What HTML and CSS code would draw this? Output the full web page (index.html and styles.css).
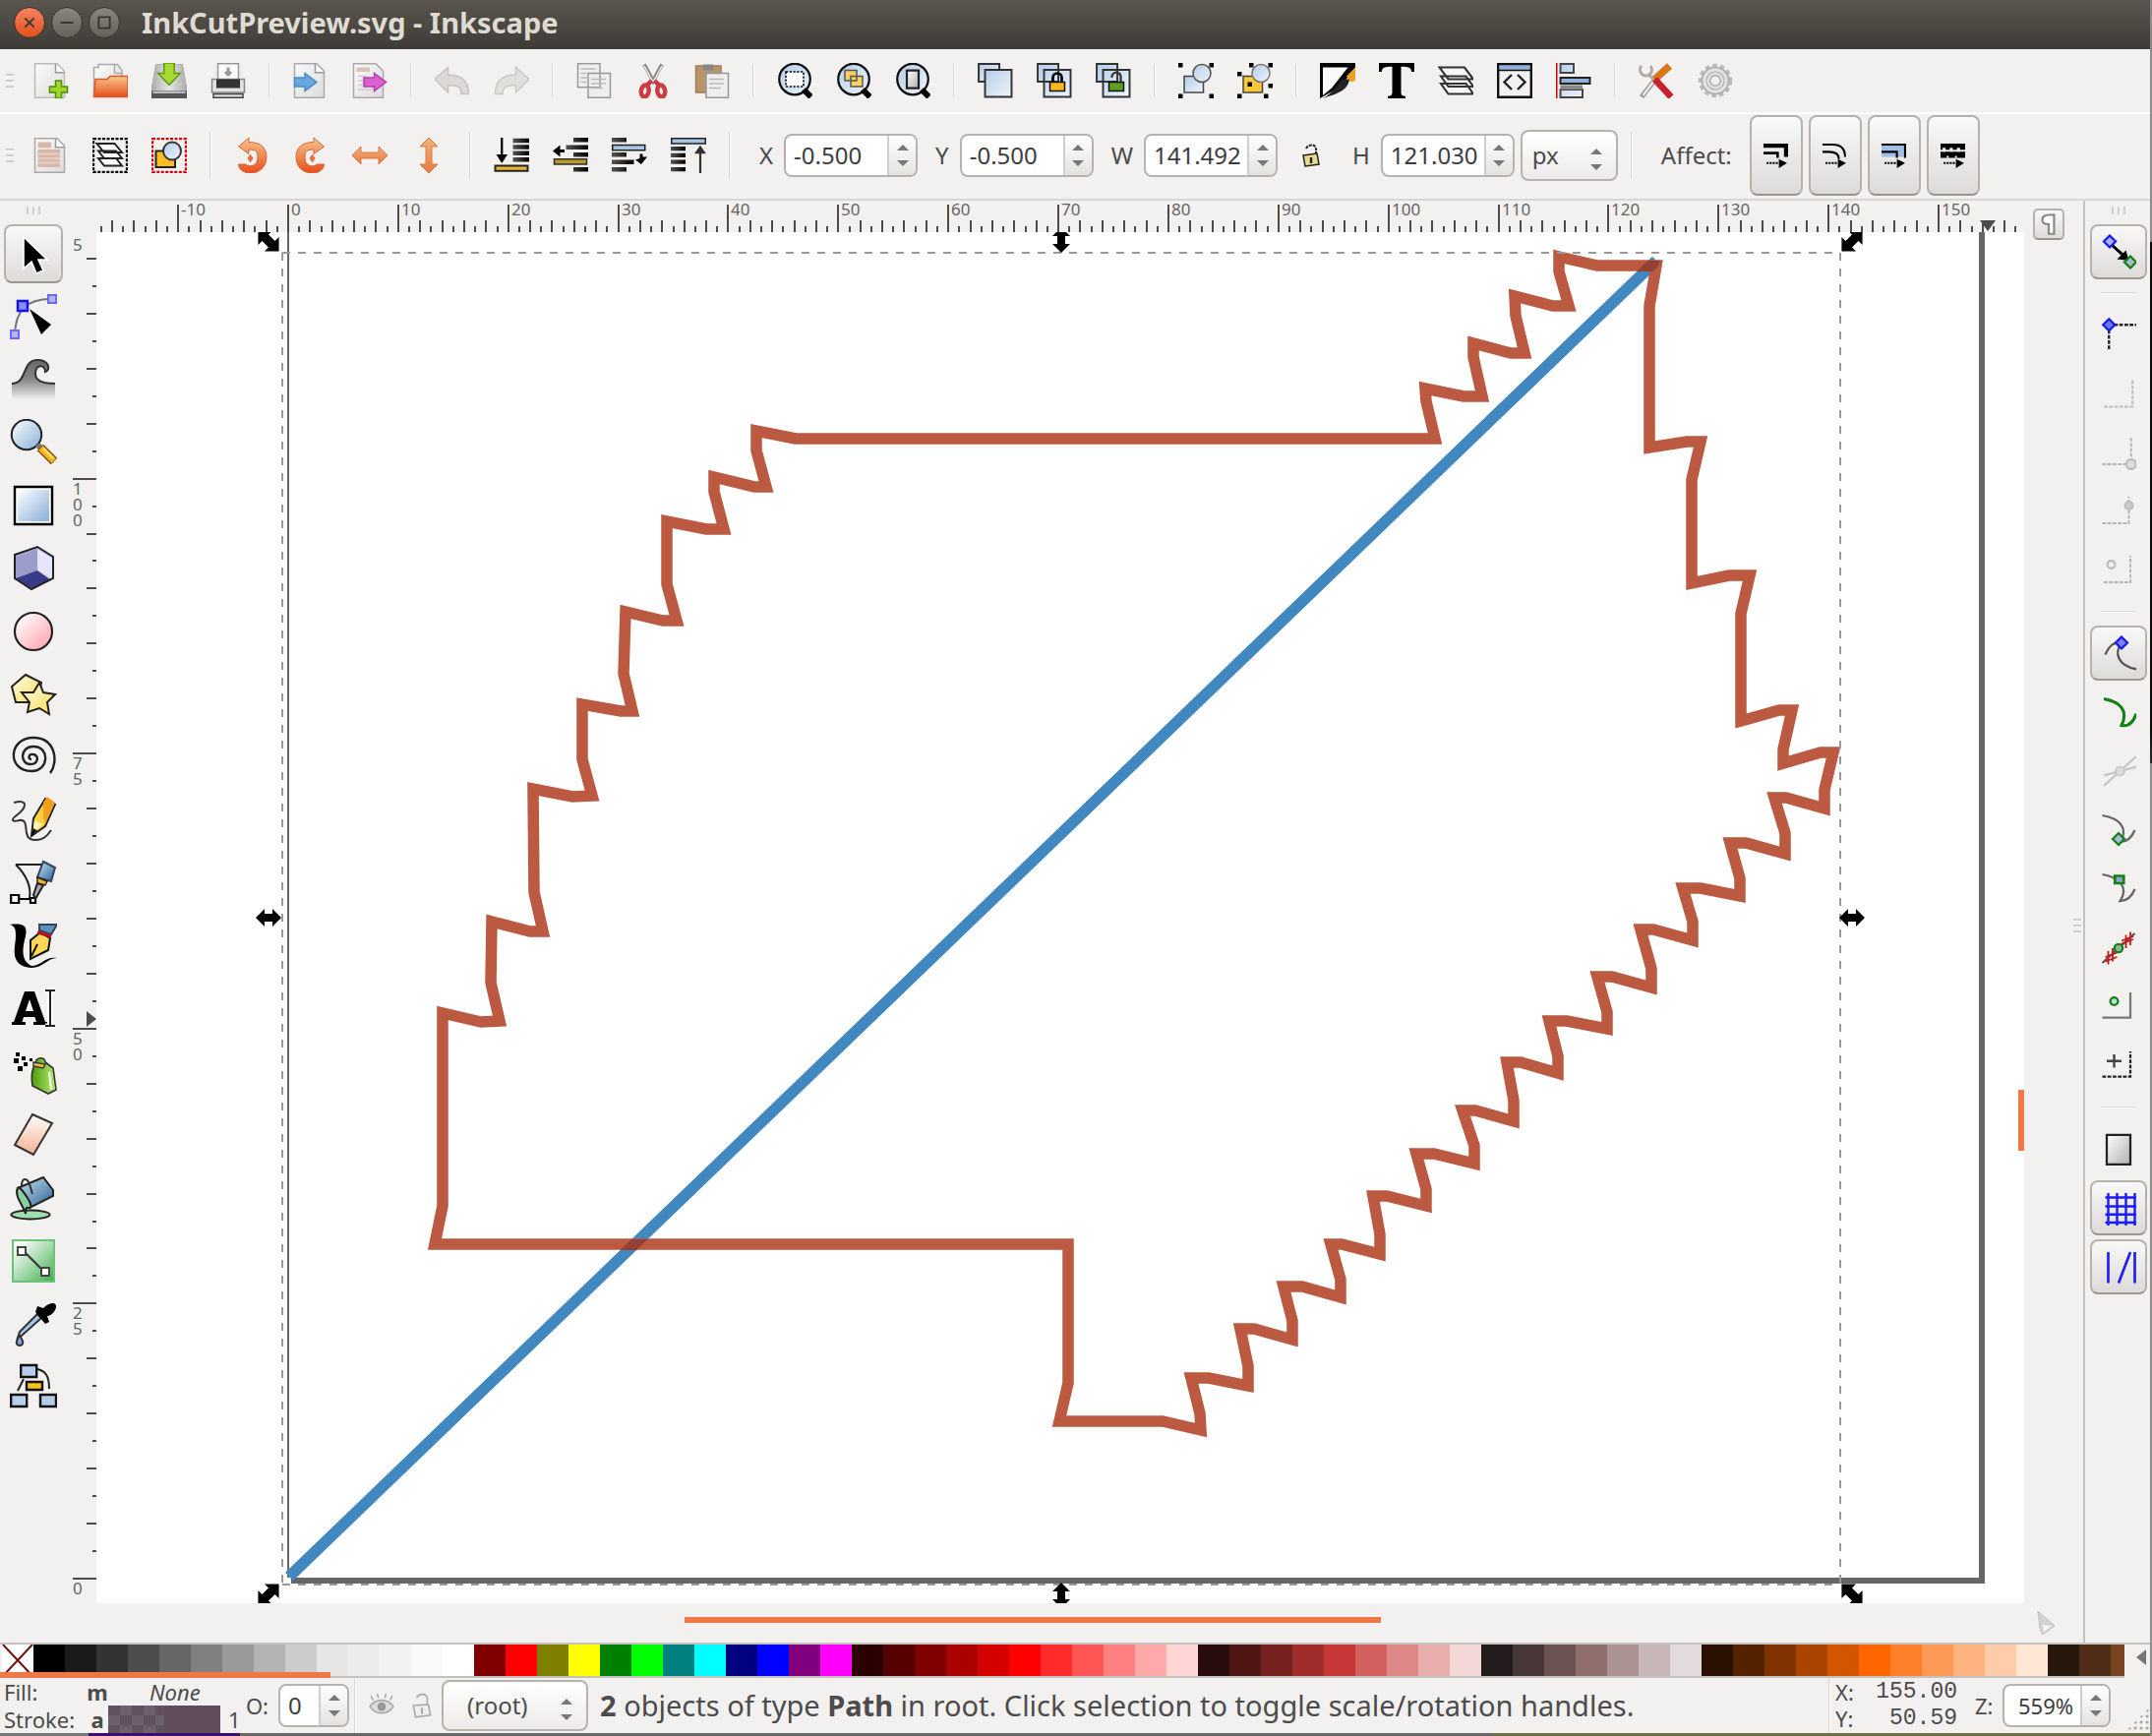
FILE: index.html
```html
<!DOCTYPE html>
<html lang="en">
<head>
<meta charset="utf-8">
<title>InkCutPreview.svg - Inkscape</title>
<link rel="stylesheet" href="styles.css">
</head>
<body>
<svg class="defs" aria-hidden="true">
  <defs>
    <linearGradient id="blue" x1="0" y1="0" x2="1" y2="1"><stop offset="0" stop-color="#fff"/><stop offset="1" stop-color="#86aed6"/></linearGradient>
    <linearGradient id="pale" x1="0" y1="0" x2="1" y2="1"><stop offset="0" stop-color="#b4cde8"/><stop offset="1" stop-color="#eef4fb"/></linearGradient>
    <linearGradient id="pink" x1="0" y1="0" x2="1" y2="1"><stop offset="0.1" stop-color="#fff"/><stop offset="1" stop-color="#ff9aa4"/></linearGradient>
    <linearGradient id="yellow" x1="0" y1="0" x2="1" y2="1"><stop offset="0" stop-color="#fffdf0"/><stop offset="1" stop-color="#fbdc4c"/></linearGradient>
    <linearGradient id="gold" x1="0" y1="0" x2="1" y2="1"><stop offset="0" stop-color="#fff0a0"/><stop offset="1" stop-color="#f0a000"/></linearGradient>
    <linearGradient id="grey" x1="0" y1="0" x2="1" y2="1"><stop offset="0" stop-color="#fff"/><stop offset="1" stop-color="#b0b0b0"/></linearGradient>
    <linearGradient id="page" x1="0" y1="0" x2="1" y2="1"><stop offset="0" stop-color="#fafafa"/><stop offset="1" stop-color="#dcdcdc"/></linearGradient>
    <linearGradient id="orange" x1="0" y1="0" x2="0" y2="1"><stop offset="0" stop-color="#f7c88c"/><stop offset="1" stop-color="#e84c1c"/></linearGradient>
    <linearGradient id="amber" x1="0" y1="0" x2="0" y2="1"><stop offset="0" stop-color="#f2b478"/><stop offset="1" stop-color="#e87840"/></linearGradient>
    <linearGradient id="green" x1="0" y1="0" x2="1" y2="1"><stop offset="0.1" stop-color="#fff"/><stop offset="1" stop-color="#3fae4f"/></linearGradient>
    <linearGradient id="lime" x1="0" y1="0" x2="1" y2="0"><stop offset="0" stop-color="#4e9a06"/><stop offset="1" stop-color="#b8ee78"/></linearGradient>
    <linearGradient id="teal" x1="0" y1="0" x2="1" y2="1"><stop offset="0" stop-color="#c8e8f0"/><stop offset="1" stop-color="#2c5f96"/></linearGradient>
    <linearGradient id="skin" x1="0" y1="0" x2="0" y2="1"><stop offset="0" stop-color="#fff"/><stop offset="1" stop-color="#f3b090"/></linearGradient>
    <linearGradient id="wave" x1="0" y1="0" x2="0" y2="1"><stop offset="0" stop-color="#666"/><stop offset="0.5" stop-color="#888"/><stop offset="1" stop-color="#eee"/></linearGradient>
    <linearGradient id="bar" x1="0" y1="0" x2="1" y2="0"><stop offset="0" stop-color="#555"/><stop offset="1" stop-color="#000"/></linearGradient>
    <linearGradient id="disk" x1="0" y1="0" x2="1" y2="0"><stop offset="0" stop-color="#aaa"/><stop offset="0.5" stop-color="#e6e6e6"/><stop offset="1" stop-color="#aaa"/></linearGradient>
  </defs>
</svg>

<header class="titlebar">
  <button class="wm close" aria-label="Close"><svg viewBox="0 0 32 32"><path d="M11 11l10 10M21 11L11 21"/></svg></button>
  <button class="wm" aria-label="Minimize"><svg viewBox="0 0 32 32"><path d="M9 16h14"/></svg></button>
  <button class="wm" aria-label="Maximize"><svg viewBox="0 0 32 32"><path d="M10 10h12v12H10z"/></svg></button>
  <h1>InkCutPreview.svg - Inkscape</h1>
</header>

<nav class="commands" aria-label="Commands">
  <span class="grip"></span>
  <button aria-label="New"><svg viewBox="0 0 24 24"><path d="M1 .5h15l5 5v18H1z" fill="url(#page)" stroke="#bbb"/><path d="M15 .5v6h6" fill="#fff" stroke="#999"/><path d="M15 12h4v4h4v4h-4v4h-4v-4h-4v-4h4z" fill="#9ad62c" stroke="#4e8f06"/></svg></button>
  <button aria-label="Open"><svg viewBox="0 0 24 24"><path d="M1 22V3h3V1h13l3 4v17z" fill="url(#page)" stroke="#aaa"/><path d="M15 1v6h5" fill="none" stroke="#aaa"/><path d="M1 23l1-12h8l2-2h12v14z" fill="url(#orange)" stroke="#dc5a2c"/></svg></button>
  <button aria-label="Save"><svg viewBox="0 0 24 24"><path d="M3 1h18l3 17v5H0v-5z" fill="url(#disk)" stroke="#aaa" stroke-width=".6"/><path d="M0 19h24v5H0z" fill="#555"/><path d="M1 20h22" stroke="#ddd"/><path d="M8.500 0h7v7h4L12 15 4.500 7h4z" fill="#a6da30" stroke="#5d9a10"/></svg></button>
  <button aria-label="Print"><svg viewBox="0 0 24 24"><path d="M5 .5h14V12H5z" fill="#fafafa" stroke="#999"/><path d="M12 3v4m-2-1l2 2 2-2" stroke="#999" stroke-width="2" fill="none"/><path d="M1 11h22v9H1z" fill="#e0e0e0" stroke="#888"/><path d="M4 11h16v6H4z" fill="#333"/><path d="M2 21h20v2.500H2z" fill="#ddd" stroke="#444"/></svg></button>
  <span class="sep"></span>
  <button aria-label="Import"><svg viewBox="0 0 24 24"><path d="M1 .5h15l5 5v18H1z" fill="url(#page)" stroke="#aaa"/><path d="M15 .5v6h6" fill="#fff" stroke="#999"/><path d="M1 10h7V7l8 6-8 6v-3H1z" fill="#6aa5dc" stroke="#4a8aca"/></svg></button>
  <button aria-label="Export"><svg viewBox="0 0 24 24"><path d="M1 .5h15l5 5v18H1z" fill="url(#page)" stroke="#aaa"/><path d="M3 3h9v3H3z" fill="#dcc4b8"/><path d="M4 9h6M4 12h4M4 15h4M4 18h10" stroke="#ccc"/><path d="M8 10h7V7l8 6-8 6v-3H8z" fill="#d862d0" stroke="#b83cb0"/></svg></button>
  <span class="sep"></span>
  <button aria-label="Undo"><svg viewBox="0 0 24 24"><path d="M0 11l9-8v5c8 0 14 3 14 13h-5c0-5-3-6-9-6v5z" fill="#dcd8d6" stroke="#c8c4c2"/></svg></button>
  <button aria-label="Redo"><svg viewBox="0 0 24 24"><path d="M24 11l-9-8v5C7 8 1 11 1 21h5c0-5 3-6 9-6v5z" fill="#dfe0dc" stroke="#c8cac4"/></svg></button>
  <span class="sep"></span>
  <button aria-label="Copy"><svg viewBox="0 0 24 24"><path d="M1 .5h15v16H1zM8 7h15v16.500H8z" fill="#eee" stroke="#999"/><path d="M3 4h10M3 7h4M3 10h4M3 13h4M10 11h10M10 14h10M10 17h8" stroke="#bbb"/></svg></button>
  <button aria-label="Cut"><svg viewBox="0 0 24 24"><path d="M6 1l7 13M18 1l-7 13" stroke="#888" stroke-width="2.500"/><path d="M6 2l6 11M18 2l-6 11" stroke="#eee"/><path d="M11 12l-4 4M13 12l4 4" stroke="#cc3a42" stroke-width="3"/><ellipse cx="6.500" cy="19" rx="2.600" ry="4" transform="rotate(8 6.500 19)" fill="none" stroke="#cc3a42" stroke-width="3"/><ellipse cx="17.500" cy="19" rx="2.600" ry="4" transform="rotate(-8 17.500 19)" fill="none" stroke="#cc3a42" stroke-width="3"/></svg></button>
  <button aria-label="Paste"><svg viewBox="0 0 24 24"><path d="M1 2h17v18H1z" fill="#b89468" stroke="#a07c50"/><path d="M6 1h7v4H6z" fill="#888"/><path d="M8 7h15v16.500H8z" fill="#eee" stroke="#999"/><path d="M10 11h10M10 14h10M10 17h8" stroke="#bbb"/></svg></button>
  <span class="sep"></span>
  <button aria-label="Zoom selection"><svg viewBox="0 0 24 24"><circle cx="12" cy="11" r="10.500" fill="url(#pale)" stroke="#111" stroke-width="1.500"/><path d="M18 18l5 5" stroke="#000" stroke-width="4"/><path d="M6 6h12v10H6z" fill="#fff" stroke="#000" stroke-dasharray="1.500 1"/></svg></button>
  <button aria-label="Zoom drawing"><svg viewBox="0 0 24 24"><circle cx="12" cy="11" r="10.500" fill="url(#pale)" stroke="#111" stroke-width="1.500"/><path d="M18 18l5 5" stroke="#000" stroke-width="4"/><path d="M6 5h8v7H6zM10 9h8v7h-8z" fill="#fbd060" stroke="#555"/></svg></button>
  <button aria-label="Zoom page"><svg viewBox="0 0 24 24"><circle cx="12" cy="11" r="10.500" fill="url(#pale)" stroke="#111" stroke-width="1.500"/><path d="M18 18l5 5" stroke="#000" stroke-width="4"/><path d="M8 5h8v12H8z" fill="url(#grey)" stroke="#222" stroke-width="1.500"/></svg></button>
  <span class="sep"></span>
  <button aria-label="Duplicate"><svg viewBox="0 0 24 24"><path d="M.7.700h14v12H.700z" fill="url(#pale)" stroke="#333" stroke-width="1.300"/><path d="M5 4.700h18V23H5z" fill="url(#pale)" stroke="#333" stroke-width="1.300"/></svg></button>
  <button aria-label="Clone"><svg viewBox="0 0 24 24"><path d="M.7.700h14v12H.700zM5 4.700h18V23H5z" fill="url(#pale)" stroke="#333" stroke-width="1.300"/><path d="M11 13v-3a3 3 0 0 1 6 0v3" fill="none" stroke="#000" stroke-width="1.800"/><path d="M9 13h10v6H9z" fill="#f8b820" stroke="#111"/></svg></button>
  <button aria-label="Unlink clone"><svg viewBox="0 0 24 24"><path d="M.7.700h14v12H.700zM5 4.700h18V23H5z" fill="url(#pale)" stroke="#333" stroke-width="1.300"/><path d="M11 10a3 3 0 0 1 6-1v4" fill="none" stroke="#333" stroke-width="1.500"/><path d="M9 13h10v6H9z" fill="#5c9c20" stroke="#111"/></svg></button>
  <span class="sep"></span>
  <button aria-label="Group"><svg viewBox="0 0 24 24"><path d="M4 9h13v11H4z" fill="url(#pale)" stroke="#444"/><circle cx="16" cy="7" r="6" fill="url(#pale)" stroke="#555"/><path d="M0 0h3v3H0zM21 0h3v3h-3zM0 21h3v3H0zM21 21h3v3h-3z"/></svg></button>
  <button aria-label="Ungroup"><svg viewBox="0 0 24 24"><path d="M4 9h13v11H4z" fill="#fbc838" stroke="#444"/><circle cx="16" cy="7" r="6" fill="url(#pale)" stroke="#777"/><path d="M0 6h3v3H0zM8 0h3v3H8zM21 0h3v3h-3zM0 21h3v3H0zM18 21h3v3h-3zM21 14h3v3h-3zM7 13h3v3H7z"/></svg></button>
  <span class="sep"></span>
  <button aria-label="Fill and stroke"><svg viewBox="0 0 24 24"><path d="M0 0h24v3L14 16 0 24z"/><path d="M2 3h17L8 17l-6 5z" fill="#fafafa"/><path d="M24 3v9l-3 1-3-4z" fill="#f0a020"/><path d="M20 11c-1 8-9 10-18 13 6-3 9-8 13-13z" fill="#222"/></svg></button>
  <button aria-label="Text and font"><svg viewBox="0 0 24 24"><path d="M0 0h24v6h-2c0-3-2-3.500-7-3.500V20c0 2 1 2.500 3 2.500V24H6v-1.500c2 0 3-.5 3-2.500V2.500C4 2.500 2 3 2 6H0z"/></svg></button>
  <button aria-label="Layers"><svg viewBox="0 0 24 24"><path d="M2 14h17l5 7H7zM2 9h17l5 7H7zM1 3h17l6 8H7z" fill="#f6f6f6" stroke="#333" stroke-width="1.400"/></svg></button>
  <button aria-label="XML editor"><svg viewBox="0 0 24 24"><path d="M.800.800h22.400v22.400H.800z" fill="#f2f2f2" stroke="#111" stroke-width="1.600"/><path d="M1 1h22v4H1z" fill="#8fb2dc" stroke="#111"/><path d="M10 8l-5 5 5 5M14 8l5 5-5 5" fill="none" stroke="#222" stroke-width="1.600"/></svg></button>
  <button aria-label="Align and distribute"><svg viewBox="0 0 24 24"><path d="M.5 0v24" stroke="#d00000"/><path d="M3 .700h9v6H3zM3 18h15v5.300H3z" fill="url(#pale)" stroke="#444" stroke-width="1.300"/><path d="M3 10h20v4H3z" fill="#8fb0d8" stroke="#222" stroke-width="1.300"/><path d="M3 15h15v3H3z" fill="#888"/></svg></button>
  <span class="sep"></span>
  <button aria-label="Preferences"><svg viewBox="0 0 24 24"><path d="M2 23L13 9" stroke="#999" stroke-width="3.500"/><path d="M3 22L12 10" stroke="#eee" stroke-width="1.500"/><path d="M2 2a4 4 0 1 0 6 0M7 8l4 4" fill="none" stroke="#aaa" stroke-width="2"/><path d="M11 11L21 2" stroke="#d8781c" stroke-width="5"/><path d="M11 11l11 12" stroke="#c8202c" stroke-width="4.500"/></svg></button>
  <button aria-label="Document properties"><svg viewBox="0 0 24 24"><circle cx="12" cy="12" r="10" fill="#ddd" stroke="#bbb" stroke-width="3" stroke-dasharray="3 2"/><circle cx="12" cy="12" r="9" fill="#e2e2e2" stroke="#aaa"/><circle cx="12" cy="12" r="6" fill="none" stroke="#bbb"/><circle cx="12" cy="12" r="3.500" fill="#f2f1ef" stroke="#aaa"/></svg></button>
</nav>

<form class="tool-controls" aria-label="Selection controls">
  <span class="grip"></span>
  <button type="button" aria-label="Select all"><svg viewBox="0 0 24 24"><path d="M1 .5h15l5 5v18H1z" fill="url(#page)" stroke="#aaa"/><path d="M15 .5v6h6" fill="#fff" stroke="#999"/><path d="M3 3h9v4H3zM3 8h15v12H3z" fill="#d8b8aa"/><path d="M3 11h15M3 14h15M3 17h15" stroke="#e6d4cc"/></svg></button>
  <button type="button" aria-label="Select all in layers"><svg viewBox="0 0 24 24"><path d="M.700.700h22.600v22.600H.700z" fill="none" stroke="#000" stroke-width="1.500" stroke-dasharray="2 1"/><path d="M4 14h12l4 5H8zM4 9h12l4 5H8zM3 4h12l5 6H8z" fill="#fff" stroke="#222" stroke-width="1.300"/></svg></button>
  <button type="button" aria-label="Deselect"><svg viewBox="0 0 24 24"><path d="M.700.700h22.600v22.600H.700z" fill="none" stroke="#d00010" stroke-width="1.500" stroke-dasharray="2 1"/><path d="M3 9h13v11H3z" fill="#fbc020" stroke="#222" stroke-width="1.300"/><circle cx="14" cy="9" r="6" fill="url(#pale)" stroke="#333" stroke-width="1.300"/></svg></button>
  <span class="sep tall"></span>
  <button type="button" aria-label="Rotate left"><svg viewBox="0 0 24 24"><path d="M3 6l7-6v3c8 0 12 4 12 10 0 7-5 11-11 11-5 0-8-3-8-6h5c2 2 8 2 8-5 0-4-2-5-6-5v3z" fill="url(#orange)" stroke="#d06030" stroke-width=".6"/><path d="M11 11l2 3-2 3-2-3z" fill="#e87040"/></svg></button>
  <button type="button" aria-label="Rotate right"><svg viewBox="0 0 24 24"><g transform="matrix(-1 0 0 1 24 0)"><path d="M3 6l7-6v3c8 0 12 4 12 10 0 7-5 11-11 11-5 0-8-3-8-6h5c2 2 8 2 8-5 0-4-2-5-6-5v3z" fill="url(#orange)" stroke="#d06030" stroke-width=".6"/><path d="M11 11l2 3-2 3-2-3z" fill="#e87040"/></g></svg></button>
  <button type="button" aria-label="Flip horizontal"><svg viewBox="0 0 24 24"><path d="M0 12l6-6v4h12V6l6 6-6 6v-4H6v4z" fill="url(#amber)" stroke="#d87040" stroke-width=".6"/></svg></button>
  <button type="button" aria-label="Flip vertical"><svg viewBox="0 0 24 24"><path d="M12 0l6 6h-4v12h4l-6 6-6-6h4V6H6z" fill="url(#amber)" stroke="#d87040" stroke-width=".6"/></svg></button>
  <span class="sep tall"></span>
  <button type="button" aria-label="Lower to bottom"><svg viewBox="0 0 24 24"><path d="M13 .5h11v3H13zM13 4.800h11v3H13zM13 9h11v3H13zM13 13.300h11v3H13z" fill="url(#bar)"/><path d="M5.500 0v14M3 12l2.500 4L8 12z" stroke="#000" stroke-width="1.500"/><path d="M1 19h22v3.500H1z" fill="#e8b830" stroke="#222" stroke-width="1.300"/></svg></button>
  <button type="button" aria-label="Lower"><svg viewBox="0 0 24 24"><path d="M14 0h10v3H14zM9 5h15v3H9zM14 10h10v3H14zM14 20h10v3H14z" fill="url(#bar)"/><path d="M0 9l5-4v3h3v2H5v3z"/><path d="M1 14.500h22V18H1z" fill="#b89a30" stroke="#333"/></svg></button>
  <button type="button" aria-label="Raise"><svg viewBox="0 0 24 24"><path d="M0 0h10v3H0zM0 10h10v3H0zM0 15h15v3H0zM0 20h10v3H0z" fill="url(#bar)"/><path d="M.5 5h22v3.500H.500z" fill="#a8c4e4" stroke="#222"/><path d="M16 15l4 3 4-5h-3v-2h-2v3z"/></svg></button>
  <button type="button" aria-label="Raise to top"><svg viewBox="0 0 24 24"><path d="M.5.500h23V4H.500z" fill="#a8c4e4" stroke="#222"/><path d="M0 6h10v2.800H0zM0 10.500h10v2.800H0zM0 15h10v2.800H0zM0 20h10v2.800H0z" fill="url(#bar)"/><path d="M20 24V8M17.500 10L20 6.500l2.500 3.500z" stroke="#333" stroke-width="1.500"/></svg></button>
  <span class="sep tall"></span>

  <div class="field"><label for="x">X</label><span class="spin"><input id="x" value="-0.500"><span class="steps"></span></span></div>
  <div class="field"><label for="y">Y</label><span class="spin"><input id="y" value="-0.500"><span class="steps"></span></span></div>
  <div class="field"><label for="w">W</label><span class="spin"><input id="w" value="141.492"><span class="steps"></span></span></div>
  <button type="button" class="lock" aria-label="Lock ratio"><svg viewBox="0 0 20 24"><path d="M5 5c2-5 11-5 10 2v5" fill="none" stroke="#222" stroke-width="2" stroke-dasharray="3 1"/><path d="M2 12l14-2 2 11-14 2z" fill="#e8dc88" stroke="#222" stroke-width="1.500"/><path d="M10 14v6" stroke="#222" stroke-width="2.500"/></svg></button>
  <div class="field"><label for="h">H</label><span class="spin"><input id="h" value="121.030"><span class="steps"></span></span></div>
  <span class="combo unit"><select aria-label="Unit"><option>px</option></select></span>
  <span class="sep tall"></span>
  <span class="affect">Affect:</span>
  <div class="toggles">
    <button type="button" aria-label="Scale stroke width"><svg viewBox="0 0 24 24"><path d="M0 0h24v13h-4V4H0zM0 8h15v6h-2.500v-3.500H0z"/><path d="M3 19h12" stroke="#000" stroke-width="2" stroke-dasharray="2 1"/><path d="M15 15l8 4-8 5z"/></svg></button>
    <button type="button" aria-label="Scale rounded corners"><svg viewBox="0 0 24 24"><path d="M0 1h10c8 0 12 4 12 12M0 8h6c6 0 10 2 10 7" fill="none" stroke="#000" stroke-width="2"/><path d="M3 19h12" stroke="#000" stroke-width="2" stroke-dasharray="2 1"/><path d="M15 15l8 4-8 5z"/></svg></button>
    <button type="button" aria-label="Move gradients"><svg viewBox="0 0 24 24"><path d="M0 0h23v13H0z" fill="#9fc0e4"/><path d="M0 1h23v13M0 8h15v6" fill="none" stroke="#000" stroke-width="2"/><path d="M3 19h12" stroke="#000" stroke-width="2" stroke-dasharray="2 1"/><path d="M15 15l8 4-8 5z"/></svg></button>
    <button type="button" aria-label="Move patterns"><svg viewBox="0 0 24 24"><path d="M0 0h24v6H0zM0 8h24v6H0z"/><path d="M2 4h3v4H2zM9 4h3v4H9zM16 4h3v4h-3zM6 12h2v2H6zM14 12h2v2h-2z" fill="#eee"/><path d="M3 19h12" stroke="#000" stroke-width="2" stroke-dasharray="2 1"/><path d="M15 15l8 4-8 5z"/></svg></button>
  </div>
</form>

<main class="workspace">
  <nav class="toolbox" aria-label="Tools">
    <span class="grip upright"></span>
    <button class="on" aria-label="Select"><svg viewBox="0 0 24 24"><path d="M7 3.500v16l4-3.500 2.500 6 3.500-1.500-2.500-5.500h4.500z" stroke="#fff" stroke-width=".8"/></svg></button>
    <button aria-label="Edit nodes"><svg viewBox="0 0 24 24"><path d="M2.500 21C3 9 8 3 21 3" fill="none" stroke="#777"/><path d="M10 8l11 8-5 5z"/><path d="M4 4h5v5H4z" fill="#8a8af8" stroke="#1010ff" stroke-width="1.200"/><path d="M19.500 1h4v4h-4zM.5 19h4v4h-4z" fill="#b4b4fa" stroke="#6a6aff"/></svg></button>
    <button aria-label="Tweak"><svg viewBox="0 0 24 24"><path d="M1 14c8 0 5-12 13-12 6 0 7 5 4 6 0-4-5-4-5 1 0 3 3 5 10 5v8H1z" fill="url(#wave)"/><path d="M1 14c8 0 5-12 13-12 6 0 7 5 4 6 0-4-5-4-5 1 0 3 3 5 10 5" fill="none" stroke="#333"/></svg></button>
    <button aria-label="Zoom"><svg viewBox="0 0 24 24"><circle cx="8.500" cy="8" r="7.600" fill="url(#blue)" stroke="#222"/><path d="M14 13l3 3" stroke="#777" stroke-width="3"/><path d="M15.500 14.500l7 7" stroke="#805010" stroke-width="4.600"/><path d="M15.800 14.800l6.500 6.500" stroke="#fab020" stroke-width="3.200"/><path d="M17 15l5 5" stroke="#ffe870"/></svg></button>
    <button aria-label="Rectangle"><svg viewBox="0 0 24 24"><path d="M2.500 2.500h19v19h-19z" fill="#fff" stroke="#000" stroke-width="1.200"/><path d="M4 4h16v16H4z" fill="url(#blue)"/></svg></button>
    <button aria-label="3D box"><svg viewBox="0 0 24 24"><path d="M2.500 5L14 1l8 5v11l-11 5.500-8.500-5.500z" fill="#b4b4dc"/><path d="M3 6l11-4v11L3 17z" fill="#9c9ccc"/><path d="M14 2l8 5v11l-8-5z" fill="#e4e4fc"/><path d="M3 17l11-4 7 5-10 4z" fill="#39398a"/><path d="M2.500 5L14 1l8 5v11l-11 5.500-8.500-5.500z" fill="none" stroke="#222"/></svg></button>
    <button aria-label="Ellipse"><svg viewBox="0 0 24 24"><circle cx="12" cy="12" r="9.500" fill="url(#pink)" stroke="#222" stroke-width="1.100"/></svg></button>
    <button aria-label="Star"><svg viewBox="0 0 24 24"><path d="M8 2l8 4-2 10H3L1 8z" fill="url(#yellow)" stroke="#222"/><path d="M15 6l2 5 6 1-4 4 1 6-5-3-6 2 1-5-4-5h6z" fill="url(#yellow)" stroke="#222"/></svg></button>
    <button aria-label="Spiral"><svg viewBox="0 0 24 24"><path d="M11 13c-2 0-1.500-3 1-2.500 3 .5 2.500 5-1.500 5-5.500 0-5.500-9 1.500-9 8.500 0 8 12.500-1 12.500C-1.500 19-1 2 12 2c11 0 13 12 8.500 18" fill="none" stroke="#222" stroke-width="1.200"/></svg></button>
    <button aria-label="Pencil"><svg viewBox="0 0 24 24"><path d="M2 3c8-2 6 3 2 6s-3 4 1 3c6-1 0 10 8 10 4 0 6-2 8-5" fill="none" stroke="#333"/><path d="M11 20l1-9 6-10 5 3-5 11z" fill="#fcd040" stroke="#222"/><path d="M17 3l2-3 4 3-5 11-1-4z" fill="#f0a020"/><path d="M11 20l1-4 2 1z"/><path d="M12.500 12l4 2-3 3-1.500-1z" fill="#fff0c0"/></svg></button>
    <button aria-label="Bezier"><svg viewBox="0 0 24 24"><path d="M3 2.500h13M3 2.500c5 5 8 11 7 17" fill="none" stroke="#222"/><path d="M4 20h8" stroke="#000"/><path d="M.600 18h4v4h-4zM10.500 19.500h2.500v2.500h-2.500z" fill="#fff" stroke="#000" stroke-width="1.100"/><path d="M17 1l6 3-2 7-7-2z" fill="url(#teal)" stroke="#346"/><path d="M14 9l5 2-1 2-4-1z" fill="#f0b030" stroke="#222" stroke-width=".7"/><path d="M14 12l3 1-4 7-1-2z" fill="#aaa" stroke="#222"/></svg></button>
    <button aria-label="Calligraphy"><svg viewBox="0 0 24 24"><path d="M0 1c9-1 9 2 7.500 8s-1 11 3.500 13c5 0 7-5 13-4-5 0-7 5-13 5C-1 22 3 12 3 7c0-3 0-5-3-6z"/><path d="M10.500 18.500V9l5-4 5 3-1 6z" fill="#fcd858" stroke="#111"/><path d="M15 1h9l-3 5-6-2z" fill="#5c90c4" stroke="#345"/><path d="M14 5l7 2" stroke="#c01020" stroke-width="1.600"/><path d="M11 17l3-6" stroke="#111"/></svg></button>
    <button aria-label="Text"><svg viewBox="0 0 24 24"><path d="M1 20v-1.500h1L7.500 3h5L18 18.500h1V20h-7v-1.500h1.500L12.700 16H7l-.7 2.500H8V20zM8 13h4l-2-6z"/><path d="M18 2.500h5M20.500 2.500v18M18 20.500h5" fill="none" stroke="#fff" stroke-width="2.600"/><path d="M18 2.500h5M20.500 2.500v18M18 20.500h5" fill="none" stroke="#222"/></svg></button>
    <button aria-label="Spray"><svg viewBox="0 0 24 24"><path d="M3 2h2v2H3zM2 5h2.500v2.500H2zM6 4h2v2H6zM4 9h2.500v2.500H4zM7 7h2v2H7zM10 5h1.500v1.500H10z"/><path d="M13 8c0-4 5-4 5-1l4 3 1.500 11-4 2-8-4c-1-6 0-9 1.500-11z" fill="url(#lime)" stroke="#333" stroke-width=".8"/><path d="M12 7l6 1-1 2-5-1z" fill="#f0c040" stroke="#333" stroke-width=".7"/><path d="M20 12l1 9" stroke="#fff"/></svg></button>
    <button aria-label="Eraser"><svg viewBox="0 0 24 24"><path d="M11.500 1.500L21.500 6l-9.500 16L2.500 17z" fill="url(#skin)" stroke="#333"/></svg></button>
    <button aria-label="Paint bucket"><svg viewBox="0 0 24 24"><ellipse cx="10.500" cy="20.500" rx="9.800" ry="2.200" fill="#9fdcae" stroke="#222"/><path d="M4 7L17 1.500l5 6.500v3l-12 6z" fill="url(#teal)" stroke="#222"/><path d="M4 7c1-1 3 2 5 5s2 5 1 5-2-1-2 3c-1-4-6-9-4-13z" fill="#8fcf9f" stroke="#222"/><path d="M6 6c0-5 3-4 4-1l1.500 5" fill="none" stroke="#333"/></svg></button>
    <button aria-label="Gradient"><svg viewBox="0 0 24 24"><path d="M1.500 1.500h21v21h-21z" fill="url(#green)" stroke="#6cc47a"/><path d="M7 7l11 11" stroke="#333"/><path d="M4 5h4v4H4zM16 15.500h4v4h-4z" fill="#fff" stroke="#444"/></svg></button>
    <button aria-label="Dropper"><svg viewBox="0 0 24 24"><path d="M16 9L6 18l-2 1 1-3 9-9z" fill="#a8c8ec" stroke="#333"/><path d="M14 3l3 1c4-4 8-3 6 1-1 2-3 3-4 3l1 3-2 1-5-6z"/><path d="M5 18c-3 4-1 5 0 5s3-1 0-5z" fill="#7ba4d8" stroke="#333"/></svg></button>
    <button aria-label="Connector"><svg viewBox="0 0 24 24"><path d="M7 8l-3 6M14 3c4 1 6 3 6 10" fill="none" stroke="#222"/><path d="M5.600 1h8v6h-8zM.600 16h8v6h-8zM15.500 16h8v6h-8z" fill="#b4cde8" stroke="#111" stroke-width="1.200"/><path d="M8.500 9.500h8v4h-8z" fill="#f6c020" stroke="#111" stroke-width="1.200"/></svg></button>
  </nav>

  <section class="stage">
    <svg id="ruler-x" class="ruler-x" viewBox="68 204 1990 32" preserveAspectRatio="xMinYMin meet"></svg>
    <svg id="ruler-y" class="ruler-y" viewBox="68 236 30 1394" preserveAspectRatio="xMinYMin meet"></svg>
    <div class="canvas">
      <svg viewBox="98 236 1960 1394" preserveAspectRatio="xMinYMin meet">
        <defs>
          <path id="handle" d="M-13 0L-4-9v5h8v-5L13 0 4 9V4h-8v5z"/>
          <clipPath id="crossings"><path d="M600 1260h90v11h-90zM1640 265h48l-4 11h-44z"/></clipPath>
        </defs>
        <path d="M98 236h1960v1394H98z" fill="#fff"/>
        <path d="M296 1607H2015V236" fill="none" stroke="#666" stroke-width="6"/>
        <path d="M293 236V1604" stroke="#666" stroke-width="2"/>
        <g fill="none" stroke-width="11.500">
          <path stroke="#4088bf" d="M294 1603L1684 265"/>
          <path stroke="#bc5a41" d="M809 446L769 438V458L779 495H767L726 485V500L736 538H718L678 530V594L688 631H674L636 622L634 685L643 723H631L592 716V772L602 809L582 810L542 802L543 907L552 947H539L500 937L499 999L508 1038L489 1039L450 1030V1226L442 1265H1086V1406L1077 1445H1182L1221 1454L1220 1437L1211 1401H1229L1269 1409V1389L1261 1351H1275L1314 1362V1343L1305 1308H1324L1363 1319V1301L1353 1265H1364L1403 1275V1255L1396 1216H1410L1450 1226V1209L1440 1173H1458L1499 1183V1165L1487 1129H1500L1539 1140V1119L1532 1080H1546L1584 1091V1074L1575 1038H1593L1634 1046V1029L1624 993H1639L1679 1004V985L1668 945H1681L1721 956V937L1711 903H1729L1769 911V893L1759 857H1775L1815 868V847L1804 811H1816L1855 822V803L1864 765H1851L1813 776V762L1822 722H1809L1770 733V624L1779 585H1758L1720 593V488L1729 449H1715L1677 455V311L1684 270H1624L1585 261V276L1595 311H1579L1540 301L1541 321L1550 359H1536L1498 349V363L1507 403H1488L1449 395L1450 408L1459 446Z"/>
          <path stroke="#944032" d="M294 1603L1690 259" clip-path="url(#crossings)"/>
        </g>
        <path d="M287 257H1871M287 1611H1871M287 257V1611M1871 257V1611" fill="none" stroke="#999" stroke-width="2" stroke-dasharray="8 8"/>
        <use href="#handle" transform="translate(273 245) rotate(45) scale(1.150)"/>
        <use href="#handle" transform="translate(1883 245) rotate(-45) scale(1.150)"/>
        <use href="#handle" transform="translate(273 1621) rotate(-45) scale(1.150)"/>
        <use href="#handle" transform="translate(1883 1621) rotate(45) scale(1.150)"/>
        <use href="#handle" transform="translate(1079 244) rotate(90)"/>
        <use href="#handle" transform="translate(1079 1622) rotate(90)"/>
        <use href="#handle" transform="translate(273 933)"/>
        <use href="#handle" transform="translate(1883 933)"/>
      </svg>
      <span class="vscroll"></span>
    </div>
    <div class="hscroll"><span></span></div>
  </section>

  <aside class="gutter">
    <button class="cms" aria-label="Color management"><svg viewBox="0 0 24 24"><path d="M6 8c0-4 3-5 11-5v18h-5v-9c-4 0-6-1-6-4z" fill="#fff" stroke="#888" stroke-width="2"/></svg></button>
    <span class="grip"></span>
    <svg class="corner" viewBox="0 0 24 24"><path d="M3 0l17 15-12 9-3-6z" fill="#d2d4d0" stroke="#c0c0be"/><path d="M8 14l9 1-8 6z" fill="#f6f6f6"/></svg>
  </aside>

  <nav class="snapbar" aria-label="Snap controls">
    <span class="grip upright"></span>
    <button class="on" aria-label="Snap"><svg viewBox="0 0 24 24"><path d="M7 7l10 9" stroke="#000" stroke-width="2"/><path d="M17 11l2 7-8-1z"/><path d="M6 1l4 4-4 4-4-4z" fill="#aab4f8" stroke="#1818f0" stroke-width="1.500"/><path d="M20 15l4 4-4 4-4-4z" fill="#a8b8d8" stroke="#128012" stroke-width="1.500"/></svg></button>
    <span class="rule"></span>
    <button aria-label="Snap bounding boxes"><svg viewBox="0 0 24 24"><path d="M5.500 5.500H24M5.500 5.500V23" fill="none" stroke="#222" stroke-width="1.600" stroke-dasharray="2.500 1"/><path d="M5.500 1.500l4 4-4 4-4-4z" fill="#6a78e8" stroke="#1818f0" stroke-width="1.500"/></svg></button>
    <button disabled aria-label="Snap to edges"><svg viewBox="0 0 24 24"><path d="M2 21h19.500V3" fill="none" stroke="#bbb" stroke-width="1.300" stroke-dasharray="2.500 1"/></svg></button>
    <button disabled aria-label="Snap to corners"><svg viewBox="0 0 24 24"><path d="M1 20h19.500V2" fill="none" stroke="#b4b4b4" stroke-width="1.300" stroke-dasharray="2.500 1"/><circle cx="20.500" cy="20" r="3.300" fill="#ddd" stroke="#bbb" stroke-width="1.500"/></svg></button>
    <button disabled aria-label="Snap edge midpoints"><svg viewBox="0 0 24 24"><path d="M1 20h18V2" fill="none" stroke="#b4b4b4" stroke-width="1.300" stroke-dasharray="2.500 1"/><circle cx="19" cy="8" r="2.600" fill="#ccc" stroke="#bbb" stroke-width="1.500"/></svg></button>
    <button disabled aria-label="Snap centers"><svg viewBox="0 0 24 24"><path d="M2 20h18V2" fill="none" stroke="#b4b4b4" stroke-width="1.300" stroke-dasharray="2.500 1"/><circle cx="7" cy="8" r="2.600" fill="none" stroke="#bbb" stroke-width="1.500"/></svg></button>
    <span class="rule"></span>
    <button class="on" aria-label="Snap nodes"><svg viewBox="0 0 24 24"><path d="M3 13c3-7 6-8 9-8M14 6c-5 5-3 15 11 17" fill="none" stroke="#555" stroke-width="1.600"/><path d="M14 1l4 4-4 4-4-4z" fill="#7a86f0" stroke="#1818f0" stroke-width="1.500"/></svg></button>
    <button aria-label="Snap to paths"><svg viewBox="0 0 24 24"><path d="M2 3c11 2 17 8 12 18 5 1 8-2 10-8" fill="none" stroke="#128012" stroke-width="2"/></svg></button>
    <button disabled aria-label="Snap intersections"><svg viewBox="0 0 24 24"><path d="M2 22L24 2M2 15l22-6" stroke="#c4c4c4" stroke-width="1.500"/><circle cx="13" cy="12" r="3" fill="#ddd" stroke="#c4c4c4"/></svg></button>
    <button aria-label="Snap cusp nodes"><svg viewBox="0 0 24 24"><path d="M1 2c12 2 18 9 12 18 5 0 8-3 10-8" fill="none" stroke="#666" stroke-width="1.500"/><path d="M12 14l4 4-4 4-4-4z" fill="#a8b8d8" stroke="#128012" stroke-width="1.500"/></svg></button>
    <button aria-label="Snap smooth nodes"><svg viewBox="0 0 24 24"><path d="M1 2c12 2 18 9 12 18 5 0 8-3 10-8" fill="none" stroke="#666" stroke-width="1.500"/><path d="M9.500 3h6v5h-6z" fill="#8fa0d0" stroke="#128012" stroke-width="1.800"/></svg></button>
    <button aria-label="Snap line midpoints"><svg viewBox="0 0 24 24"><path d="M1 22L23 2" stroke="#555" stroke-width="1.500"/><path d="M5 14v9M8 12v9M3 18l8-3M3 21l8-3M17 3v9M20 1v9M14 7l8-3M14 9l8-3" stroke="#c81818" stroke-width="1.200"/><circle cx="12" cy="12" r="2.800" fill="#8fb0a0" stroke="#128012" stroke-width="1.500"/></svg></button>
    <button aria-label="Snap object centers"><svg viewBox="0 0 24 24"><path d="M1 19h19V2" fill="none" stroke="#777" stroke-width="1.500"/><circle cx="9" cy="8" r="2.600" fill="#c0dcec" stroke="#128012" stroke-width="1.500"/></svg></button>
    <button aria-label="Snap rotation centers"><svg viewBox="0 0 24 24"><path d="M1 19h19V2" fill="none" stroke="#222" stroke-width="1.500" stroke-dasharray="2.500 1"/><path d="M4 8.500h10M9 4v9" stroke="#444" stroke-width="1.600"/></svg></button>
    <span class="rule"></span>
    <button aria-label="Snap page border"><svg viewBox="0 0 24 24"><path d="M4 2.500h16v20H4z" fill="url(#grey)" stroke="#222" stroke-width="1.500"/></svg></button>
    <button class="on" aria-label="Snap grids"><svg viewBox="0 0 24 24"><path d="M5 2v22M11 2v22M17 2v22M23 2v22M3 5h23M3 11h23M3 16.500h23M3 22h23" stroke="#1c1cf4" stroke-width="1.600"/></svg></button>
    <button class="on" aria-label="Snap guides"><svg viewBox="0 0 24 24"><path d="M5 2v21M23 2v21M12 23l8-21" stroke="#2020f4" stroke-width="1.800"/></svg></button>
  </nav>
</main>

<section class="palette" aria-label="Color palette">
  <div id="swatches" class="swatches">
    <button class="none" aria-label="No color"><svg viewBox="0 0 32 32" preserveAspectRatio="none"><path d="M1 0l30 32M31 0L1 32" stroke="#701010" stroke-width="2"/></svg></button>
  </div>
  <button class="menu" aria-label="Palette menu"><svg viewBox="0 0 12 16"><path d="M1 8l10-8v16z" fill="#777"/></svg></button>
  <span class="thumb"></span>
</section>

<footer class="status">
  <div class="paint">
    <span>Fill:</span><b>m</b><i>None</i>
    <span>Stroke:</span><b>a</b><span class="sample"></span><span>1</span>
  </div>
  <label class="opacity" for="o">O:</label>
  <span class="spin small"><input id="o" value="0"><span class="steps"></span></span>
  <span class="sep"></span>
  <button class="flag" aria-label="Layer visibility"><svg viewBox="0 0 24 24"><path d="M1 13c5-8 17-8 22 0-5 8-17 8-22 0z" fill="#ddd" stroke="#aaa" stroke-width="1.500"/><circle cx="12" cy="13" r="4" fill="#999"/><path d="M4 7L2 3M9 5L8 1M15 5l1-4M20 7l2-4" stroke="#aaa" stroke-width="1.500"/></svg></button>
  <button class="flag" aria-label="Layer lock"><svg viewBox="0 0 24 24"><path d="M7 5c2-5 11-5 10 2v5" fill="none" stroke="#aaa" stroke-width="1.500"/><path d="M4 12l14-1 2 10-14 2z" fill="#eee" stroke="#aaa" stroke-width="1.500"/><path d="M12 14v6" stroke="#aaa" stroke-width="2"/></svg></button>
  <span class="combo layer"><select aria-label="Layer"><option>(root)</option></select></span>
  <p><b>2</b> objects of type <b>Path</b> in root. Click selection to toggle scale/rotation handles.</p>
  <span class="sep"></span>
  <dl><dt>X:</dt><dd>155.00</dd><dt>Y:</dt><dd>50.59</dd></dl>
  <label class="zlabel" for="z">Z:</label>
  <span class="spin zoom"><input id="z" value="559%"><span class="steps"></span></span>
  <span class="resize"></span>
</footer>
<div class="behind"></div>
<script src="app.js"></script>
</body>
</html>
```
FILE: styles.css
```css
* { box-sizing: border-box; margin: 0; padding: 0; }
body {
  min-height: 100vh;
  display: flex;
  flex-direction: column;
  background: #f2f1ef;
  border-right: 2px solid;
  border-image: linear-gradient(#8c8c88 14%, #060606 14% 42%, #2c2c28 44%, #8c8c88 44%) 1;
  font: 24px/28px "Noto Sans", sans-serif;
  color: #4c4c4c;
  overflow: hidden;
}
.defs { position: absolute; width: 0; height: 0; }
button { border: 0; background: none; font: inherit; color: inherit; flex: none; display: flex; align-items: center; justify-content: center; }
svg { display: block; }

.titlebar { flex: none; height: 50px; display: flex; align-items: center; gap: 6px; padding: 0 14px 5px; background: linear-gradient(#5a564e, #3e3c37); }
.wm { width: 32px; height: 32px; border-radius: 50%; border: 1px solid #37352f; background: linear-gradient(#8a877e, #63615a); }
.wm svg { width: 30px; height: 30px; fill: none; stroke: #37352f; stroke-width: 2; }
.wm.close { background: linear-gradient(#f58560, #e24f1c); }
.titlebar h1 { font-size: 29px; line-height: 40px; color: #dfdbd2; padding-left: 16px; white-space: nowrap; }

.grip { flex: none; width: 8px; height: 14px; background: repeating-linear-gradient(#cfcdc9 0 2px, #fff 2px 3px, transparent 3px 6px); }
.grip.upright { width: 14px; height: 8px; background: repeating-linear-gradient(90deg, #cfcdc9 0 2px, #fff 2px 3px, transparent 3px 6px); }
.sep { flex: none; width: 24px; height: 34px; background: linear-gradient(90deg, #d8d6d2 50%, #fff 50%) center / 2px 100% no-repeat; }
.sep.tall { height: 48px; }

.commands, .tool-controls { flex: none; display: flex; align-items: center; padding-left: 6px; }
.commands { height: 66px; border-bottom: 2px solid #fff; }
.tool-controls { height: 88px; padding-bottom: 2px; border-bottom: 2px solid #d8d6d2; }
.commands > .grip, .tool-controls > .grip { margin-right: 8px; }
.commands > button, .tool-controls > button { width: 60px; height: 48px; }
.commands button svg, .tool-controls > button svg { width: 36px; height: 36px; }

.field { display: flex; align-items: center; gap: 11px; margin-left: 18px; }
.field label { line-height: 44px; }
.spin { display: flex; width: 136px; height: 44px; border: 2px solid #b6b3ad; border-radius: 8px; background: #fff; overflow: hidden; }
.spin input { flex: 1; min-width: 0; border: 0; padding-left: 8px; font: inherit; color: #3c3c3c; background: none; outline: 0; }
.steps { flex: none; width: 29px; border-left: 2px solid #d0cecb; background: linear-gradient(#fff, #e4e2df); display: flex; flex-direction: column; justify-content: center; align-items: center; gap: 10px; }
.steps::before, .combo::before { content: ""; border: 6px solid transparent; border-top: 0; border-bottom: 6px solid #777; }
.steps::after, .combo::after { content: ""; border: 6px solid transparent; border-bottom: 0; border-top: 6px solid #777; }
.tool-controls > button.lock { width: 20px; margin-left: 24px; margin-right: 14px; }
.tool-controls > button.lock svg { width: 20px; height: 24px; }
.combo { position: relative; flex: none; border: 2px solid #b6b3ad; border-radius: 8px; background: linear-gradient(#fff, #ecebe9); }
.combo::before, .combo::after { position: absolute; right: 14px; }
.combo::before { top: 17px; }
.combo::after { bottom: 9px; }
.combo select { appearance: none; width: 100%; height: 100%; border: 0; background: none; font: inherit; color: inherit; padding-left: 10px; }
.unit { width: 99px; height: 52px; margin-left: 6px; margin-right: 2px; }
.affect { margin: 0 18px; }
.toggles { display: flex; gap: 6px; }
.toggles button, .on, .cms { border: 2px solid #b6b3ad; border-bottom-color: #9a978f; border-radius: 8px; background: linear-gradient(#f8f8f8, #dddbd8); }
.toggles button { width: 54px; height: 82px; }
.toggles svg { width: 25px; height: 25px; }

.workspace { flex: 1; display: grid; grid-template-columns: 68px minmax(0, 1fr) 60px 68px; }
.toolbox, .snapbar, .gutter { display: flex; flex-direction: column; align-items: center; }
.toolbox { padding-top: 6px; }
.toolbox .grip { margin-bottom: 8px; }
.toolbox button { width: 60px; height: 60px; margin: 2px 0; }
.toolbox svg { width: 48px; height: 48px; }
.toolbox .on svg { margin: -2px; }

.stage { display: grid; grid-template-columns: 30px minmax(0, 1fr); grid-template-rows: auto auto 1fr; align-content: start; }
.ruler-x { grid-column: 1 / 3; width: 100%; overflow: visible; }
.ruler-y { width: 30px; height: 100%; }
.ruler-x line, .ruler-y line { stroke: #4c4c4c; stroke-width: 2; }
.ruler-x text, .ruler-y text { font-size: 17px; fill: #666; }
.canvas { position: relative; background: #fff; }
.canvas > svg { width: 100%; }
.vscroll { position: absolute; right: 0; bottom: 33%; width: 6px; height: 62px; background: #f07746; }
.hscroll { grid-column: 2; padding-top: 14px; height: 40px; display: grid; grid-template-columns: 598fr 708fr 654fr; }
.hscroll span { grid-column: 2; height: 6px; background: #f07746; }

.gutter { padding: 8px 0; justify-content: space-between; }
.gutter .grip { align-self: flex-end; margin-right: 2px; }
.cms { width: 32px; height: 32px; border-radius: 5px; margin-right: 10px; }
.cms svg { width: 26px; height: 26px; }
.corner { width: 24px; height: 24px; margin-right: 14px; }

.snapbar { border-left: 2px solid #c4c2bc; padding: 6px 0 0 2px; }
.snapbar .grip { margin-bottom: 8px; }
.snapbar button { width: 58px; height: 56px; margin: 2px 0; }
.snapbar svg { width: 36px; height: 36px; }
.rule { flex: none; width: 36px; height: 24px; background: linear-gradient(#d8d6d2 50%, #fff 50%) center / 100% 2px no-repeat; }

.palette { position: relative; flex: none; height: 36px; display: flex; border-top: 2px solid #c4c2bc; }
.swatches { flex: 1; min-width: 0; display: flex; overflow: hidden; padding-left: 2px; border-bottom: 2px solid #c4c2bc; }
.swatches button { width: 32px; height: 32px; background: #fff; }
.swatches svg { width: 32px; height: 32px; }
.menu { width: 26px; height: 26px; padding-left: 8px; }
.menu svg { width: 12px; height: 16px; }
.thumb { position: absolute; left: 0; bottom: 0; width: 336px; height: 6px; background: #f07746; }

.status { flex: none; height: 56px; display: flex; align-items: center; padding-bottom: 1px; }
.paint { display: grid; grid-template-columns: 84px 22px 114px 24px; grid-template-rows: 28px 28px; padding-left: 4px; font-size: 22px; line-height: 28px; }
.paint b { text-align: center; }
.paint i { grid-column: 3 / 5; padding-left: 42px; }
.sample { height: 28px; background: linear-gradient(90deg, transparent 50%, #5f4d5e 50%), repeating-conic-gradient(#6d5f6d 0 25%, #62525f 0 50%) 0 0 / 24px 20px; }
.paint span:last-child { padding-left: 8px; }
.opacity { width: 31px; text-align: right; padding-right: 6px; font-size: 22px; }
.spin.small { width: 72px; margin: 0 0 0 4px; }
.status .sep { width: 12px; height: 56px; }
.status .flag { width: 41px; height: 40px; }
.flag svg { width: 26px; height: 26px; }
.layer { width: 149px; height: 52px; }
.layer select { padding-left: 24px; }
.status p { flex: 1; padding-left: 12px; font-size: 29px; line-height: 40px; white-space: nowrap; }
.status dl { display: grid; grid-template-columns: 24px 100px; font: 23px/27px "Liberation Mono", monospace; }
.status dt { font-family: "Noto Sans", sans-serif; font-size: 22px; }
.status dd { text-align: right; }
.zlabel { padding-left: 18px; width: 46px; font-size: 22px; }
.spin.zoom { width: 110px; }
.zoom input { padding-left: 14px; font-size: 22px; }
.resize { width: 24px; height: 24px; margin: 28px 0 0 16px; background: radial-gradient(circle, #aaa 1px, transparent 2px) 0 0 / 6px 6px; clip-path: polygon(100% 0, 100% 100%, 0 100%); }
.behind { flex: none; height: 3px; background: linear-gradient(90deg, #777 90px, #3c1068 90px 244px, #6a6868 244px 1517px, #6f6f48 1517px); }
```
FILE: app.js
```javascript
const NS = "http://www.w3.org/2000/svg";

function add(parent, tag, attrs, text) {
  const el = document.createElementNS(NS, tag);
  for (const name in attrs) el.setAttribute(name, attrs[name]);
  if (text) el.textContent = text;
  parent.append(el);
  return el;
}

// Horizontal ruler: 10 units between labels, canvas origin at x = 293.
const rx = document.getElementById("ruler-x");
for (let u = -17; u <= 157; u++) {
  const x = Math.round(293 + u * 11.187);
  const len = u % 10 === 0 ? 28 : u % 2 === 0 ? 12 : 6;
  add(rx, "line", { x1: x, x2: x, y1: 236 - len, y2: 236 });
  if (u % 10 === 0) add(rx, "text", { x: x + 3, y: 219 }, String(u));
}
add(rx, "path", { d: "M2013 224h16l-8 11z", fill: "#4c4c4c" });

// Vertical ruler: 25 units between labels, canvas origin at y = 1605.
const ry = document.getElementById("ruler-y");
for (let i = 0; i <= 48; i++) {
  const y = Math.round(1605 - i * 27.96);
  const len = i % 10 === 0 ? 24 : i % 2 === 0 ? 10 : 4;
  add(ry, "line", { x1: 98 - len, x2: 98, y1: y, y2: y });
  if (i % 10 === 0) {
    const label = add(ry, "text", {});
    [...String(i * 2.5)].forEach((digit, n) =>
      add(label, "tspan", { x: 74, y: y + 16 + n * 16 }, digit));
  }
}
add(ry, "text", { x: 74, y: 255 }, "5");
add(ry, "path", { d: "M88 1028v16l10-8z", fill: "#4c4c4c" });

const colors = `000000 1a1a1a 333333 4d4d4d 666666 808080 999999 b3b3b3 cccccc e6e6e6 ececec f2f2f2
f9f9f9 ffffff 800000 ff0000 808000 ffff00 008000 00ff00 008080 00ffff 000080 0000ff 800080 ff00ff
2b0000 550000 800000 aa0000 d40000 ff0000 ff2a2a ff5555 ff8080 ffaaaa ffd5d5 280b0b 501616 782121
a02c2c c83737 d35f5f de8787 e9afaf f4d7d7 241c1c 483737 6c5353 916f6f ac9393 c8b7b7 e3dbdb 2b1100
552200 803300 aa4400 d45500 ff6600 ff7f2a ff9955 ffb380 ffccaa ffe6d5 28170b 502d16 784421`.split(/\s+/);
const swatches = document.getElementById("swatches");
for (const color of colors) {
  const button = document.createElement("button");
  button.style.background = "#" + color;
  button.setAttribute("aria-label", "#" + color);
  swatches.append(button);
}
```
